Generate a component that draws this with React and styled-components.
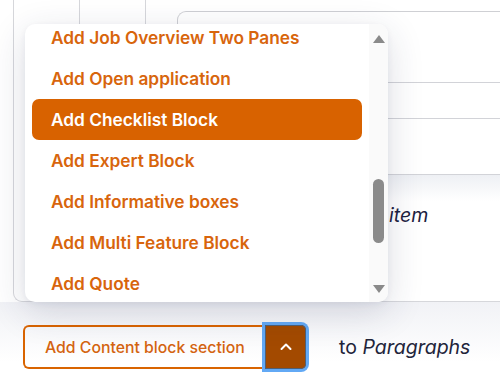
import React from 'react';
import styled, { createGlobalStyle } from 'styled-components';

const GlobalStyle = createGlobalStyle`
  * { box-sizing: border-box; }
  body {
    margin: 0;
    background: #ffffff;
    font-family: Inter, "Noto Sans", sans-serif;
  }
`;

const items = [
  'Add Job Overview Two Panes',
  'Add Open application',
  'Add Checklist Block',
  'Add Expert Block',
  'Add Informative boxes',
  'Add Multi Feature Block',
  'Add Quote',
];

export default function App() {
  return (
    <Page>
      <GlobalStyle />
      <Frame>
        <Column />
        <Column />
        <Content>
          <Card>
            <CardRow $h={71} />
            <CardRow $h={36} />
            <CardRow $h={56} />
            <ShadowRow>
              <ItemText>Add another item</ItemText>
            </ShadowRow>
          </Card>
        </Content>
      </Frame>

      <Footer>
        <ButtonGroup>
          <MainButton>Add Content block section</MainButton>
          <ToggleButton>
            <svg width="14" height="14" viewBox="0 0 14 14">
              <path d="M2.5 9 L7 4.5 L11.5 9" fill="none" stroke="#fff" strokeWidth="2" strokeLinecap="round" strokeLinejoin="round" />
            </svg>
          </ToggleButton>
        </ButtonGroup>
        <Target>
          to <em>Paragraphs</em>
        </Target>
      </Footer>

      <Menu>
        <List>
          {items.map((label) => (
            <Option key={label} $active={label === 'Add Checklist Block'}>
              {label}
            </Option>
          ))}
        </List>
        <Scrollbar>
          <Arrow viewBox="0 0 12 8">
            <path d="M6 0 L12 8 L0 8 Z" fill="#8a8a8a" />
          </Arrow>
          <Track>
            <Thumb />
          </Track>
          <Arrow viewBox="0 0 12 8">
            <path d="M0 0 L12 0 L6 8 Z" fill="#8a8a8a" />
          </Arrow>
        </Scrollbar>
      </Menu>
    </Page>
  );
}

const Page = styled.div`
  position: relative;
  width: 500px;
  height: 382px;
  overflow: hidden;
  background: #fff;
`;

const Frame = styled.div`
  display: flex;
  height: 302px;
  margin-left: 13px;
  border-left: 1px solid #d6d7db;
  border-bottom: 1px solid #d6d7db;
  border-bottom-left-radius: 9px;
`;

const Column = styled.div`
  width: 66px;
  flex-shrink: 0;
  border-right: 1px solid #d6d7db;
`;

const Content = styled.div`
  flex: 1;
  padding: 11px 0 0 31px;
`;

const Card = styled.div`
  display: flex;
  flex-direction: column;
  width: 400px;
  border-top: 1px solid #cfd0d4;
  border-left: 1px solid #cfd0d4;
  border-top-left-radius: 9px;
`;

const CardRow = styled.div`
  height: ${(p) => p.$h}px;
  border-bottom: 1px solid #d2d3d8;
`;

const ShadowRow = styled.div`
  height: 100px;
  padding: 28px 0 0 20px;
  background: linear-gradient(#eef0f4, #ffffff 26px);
`;

const ItemText = styled.span`
  display: inline-block;
  padding-left: 71px;
  font-size: 19.5px;
  font-style: italic;
  white-space: nowrap;
  color: #1c2140;
`;

const Footer = styled.div`
  display: flex;
  align-items: center;
  padding: 23px 0 0 23px;
  background: linear-gradient(#f1f2f6, #ffffff 60px);
`;

const ButtonGroup = styled.div`
  display: flex;
`;

const MainButton = styled.button`
  height: 44px;
  width: 242px;
  padding: 0 0 0 20px;
  text-align: left;
  white-space: nowrap;
  font-family: Inter, sans-serif;
  font-size: 15.8px;
  font-weight: 500;
  color: #d46410;
  background: transparent;
  border: 2px solid #d96400;
  border-right: none;
  border-radius: 6px 0 0 6px;
`;

const ToggleButton = styled.button`
  display: flex;
  align-items: center;
  justify-content: center;
  width: 41px;
  height: 44px;
  padding: 0;
  background: #a34a00;
  border: none;
  border-radius: 0 5px 5px 0;
  box-shadow: inset 0 0 0 1px #4f5f74, 0 0 0 3px #62a9f5;
`;

const Target = styled.span`
  margin-left: 33px;
  font-size: 19.5px;
  color: #22243a;

  em {
    font-style: italic;
  }
`;

const Menu = styled.div`
  position: absolute;
  left: 25px;
  top: 24px;
  width: 363px;
  height: 278px;
  display: flex;
  background: #fff;
  border-radius: 10px;
  overflow: hidden;
  box-shadow: 0 10px 36px rgba(40, 44, 80, 0.16), 0 2px 6px rgba(40, 44, 80, 0.06);
`;

const List = styled.div`
  flex: 1;
  margin-top: -7px;
  padding: 0 7px;
`;

const Option = styled.div`
  height: 41px;
  display: flex;
  align-items: center;
  padding-left: 19px;
  font-size: 17.3px;
  font-weight: 600;
  white-space: nowrap;
  border-radius: 7px;
  color: ${(p) => (p.$active ? '#ffffff' : '#d8650c')};
  background: ${(p) => (p.$active ? '#d86200' : 'transparent')};
`;

const Scrollbar = styled.div`
  width: 19px;
  display: flex;
  flex-direction: column;
  align-items: center;
  padding: 11px 0 9px;
  background: #fafafa;
`;

const Arrow = styled.svg`
  width: 12px;
  height: 8px;
  flex-shrink: 0;
`;

const Track = styled.div`
  flex: 1;
  width: 100%;
  display: flex;
  justify-content: center;
  padding-top: 136px;
`;

const Thumb = styled.div`
  width: 11px;
  height: 64px;
  border-radius: 6px;
  background: #8b8b8b;
`;
